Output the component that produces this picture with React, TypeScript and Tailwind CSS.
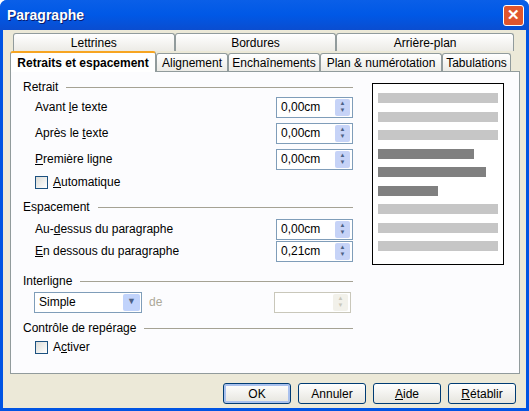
const u = (s: string, i: number) => (
  <>
    {s.slice(0, i)}
    <span className="underline">{s[i]}</span>
    {s.slice(i + 1)}
  </>
)

function Spin({ value, disabled }: { value?: string; disabled?: boolean }) {
  return (
    <div className={`flex h-[21px] w-[77px] items-center border ${disabled ? 'border-[#c9c7ba]' : 'border-[#7f9db9]'} bg-white pl-1`}>
      <span className="flex-1">{value}</span>
      <div className={`mr-[2px] flex h-[17px] w-[15px] flex-col items-center justify-center rounded-[2px] ${disabled ? 'bg-[#f2f1ea] text-[#c9c7ba]' : 'bg-[#c6d3f7] text-[#4d6185]'} text-[6px] leading-[7px]`}>
        <span>▲</span>
        <span>▼</span>
      </div>
    </div>
  )
}

function Group({ title }: { title: string }) {
  return (
    <div className="flex h-[14px] items-center gap-2">
      <span>{title}</span>
      <div className="h-px flex-1 bg-[#a5a294]" />
    </div>
  )
}

function Row({ label, value, h = 'h-[26px]' }: { label: React.ReactNode; value: string; h?: string }) {
  return (
    <div className={`flex ${h} items-center pl-[12px]`}>
      <span className="flex-1">{label}</span>
      <Spin value={value} />
    </div>
  )
}

function Check({ label }: { label: React.ReactNode }) {
  return (
    <div className="flex h-[20px] items-center gap-[5px] pl-[12px]">
      <div className="h-[13px] w-[13px] border border-[#1c5180] bg-gradient-to-br from-[#dcdcd7] to-white" />
      <span>{label}</span>
    </div>
  )
}

function Tab({ label, w, active }: { label: string; w: string; active?: boolean }) {
  return (
    <div className={`${w} flex items-center justify-center rounded-t-[3px] border border-b-0 border-[#919b9c] ${active ? 'h-[21px] -mb-px border-t-2 border-t-[#f7a521] bg-white font-bold' : 'h-[18px] bg-gradient-to-b from-white to-[#ecebe6]'}`}>
      {label}
    </div>
  )
}

export default function App() {
  const bars = ['l', 'l', 'l', 'd96', 'd108', 'd60', 'l', 'l', 'l']
  return (
    <div className="h-[411px] w-[529px] overflow-hidden rounded-t-[7px] bg-[#0054e3] text-[12px] text-black" style={{ fontFamily: '"Liberation Sans", Arial, sans-serif' }}>
      <div className="flex h-[30px] items-center justify-between bg-gradient-to-b from-[#0a5fe8] via-[#0058e6] to-[#0a4dd0] pl-[7px] pr-[5px]">
        <span className="text-[14px] font-bold text-white [text-shadow:1px_1px_#0a1a6a]">Paragraphe</span>
        <div className="flex h-[21px] w-[21px] items-center justify-center rounded-[3px] border border-white bg-[#e0552e] text-[15px] font-bold text-white">✕</div>
      </div>
      <div className="mx-[3px] h-[378px] bg-[#ece9d8] px-[7px] pt-[3px]">
        <div className="flex pl-[3px] pr-[5px]">
          <Tab label="Lettrines" w="w-[162px]" />
          <Tab label="Bordures" w="w-[162px]" />
          <Tab label="Arrière-plan" w="w-[178px]" />
        </div>
        <div className="flex items-end">
          <Tab label="Retraits et espacement" w="w-[146px]" active />
          <Tab label="Alignement" w="w-[72px]" />
          <Tab label="Enchaînements" w="w-[92px]" />
          <Tab label="Plan & numérotation" w="w-[122px]" />
          <Tab label="Tabulations" w="w-[69px]" />
        </div>
        <div className="flex h-[303px] w-[510px] border border-[#919b9c] bg-[#fcfcfe] pl-[12px] pr-[14px] pt-[8px]">
          <div className="w-[330px]">
            <Group title="Retrait" />
            <Row label={u('Avant le texte', 6)} value="0,00cm" />
            <Row label={u('Après le texte', 9)} value="0,00cm" />
            <Row label={u('Première ligne', 0)} value="0,00cm" />
            <Check label={u('Automatique', 0)} />
            <div className="mt-[8px]"><Group title="Espacement" /></div>
            <div className="mt-[4px]" />
            <Row label={u('Au-dessus du paragraphe', 3)} value="0,00cm" h="h-[22px]" />
            <Row label={u('En dessous du paragraphe', 0)} value="0,21cm" h="h-[22px]" />
            <div className="mt-[12px]"><Group title="Interligne" /></div>
            <div className="flex h-[28px] items-center pl-[11px]">
              <div className="flex h-[21px] w-[108px] items-center border border-[#7f9db9] bg-white pl-1">
                <span className="flex-1">Simple</span>
                <div className="mr-px flex h-[17px] w-[17px] items-center justify-center rounded-[2px] bg-[#c1d3fb] text-[9px] text-[#4d6185]">▼</div>
              </div>
              <span className="ml-[7px] flex-1 text-[#aca899]">de</span>
              <div className="mr-[2px]"><Spin disabled /></div>
            </div>
            <div className="mt-[5px]"><Group title="Contrôle de repérage" /></div>
            <div className="mt-[2px]"><Check label={u('Activer', 1)} /></div>
          </div>
          <div className="ml-[19px] mt-[3px] flex h-[182px] w-[132px] flex-col gap-[8.5px] border border-black bg-white px-[5px] pt-[9px]">
            {bars.map((b, i) => (
              <div key={i} className={`h-[10px] ${b === 'l' ? 'w-full bg-[#c6c6c6]' : 'bg-[#808080]'} ${b === 'd96' ? 'w-[96px]' : b === 'd108' ? 'w-[108px]' : b === 'd60' ? 'w-[60px]' : ''}`} />
            ))}
          </div>
        </div>
        <div className="mt-[9px] flex justify-end gap-[7px] pr-[3px]">
          {[['OK', -1], ['Annuler', -1], ['Aide', 0], ['Rétablir', 0]].map(([l, i]) => (
            <div key={l as string} className={`flex h-[21px] w-[68px] items-center justify-center rounded-[3px] border border-[#003c74] bg-gradient-to-b from-white to-[#e6e5de] ${l === 'OK' ? 'shadow-[inset_0_0_0_2px_#a9c1ee]' : ''}`}>
              {(i as number) >= 0 ? u(l as string, i as number) : l}
            </div>
          ))}
        </div>
      </div>
    </div>
  )
}
